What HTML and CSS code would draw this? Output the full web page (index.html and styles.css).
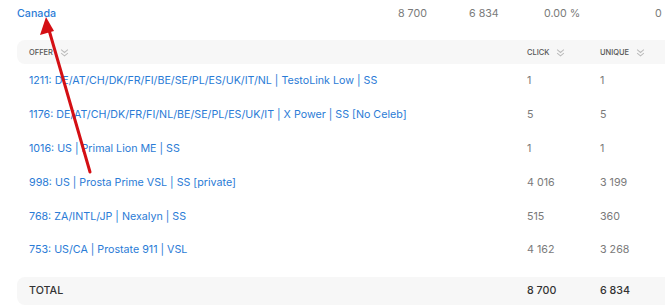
FILE: index.html
```html
<!DOCTYPE html>
<html>
<head>
<meta charset="utf-8">
<link rel="stylesheet" href="styles.css">
</head>
<body>
<div class="page">
  <div class="country-row">
    <a class="country">Canada</a>
    <span class="cnum c1">8 700</span>
    <span class="cnum c2">6 834</span>
    <span class="cnum c3">0.00 %</span>
    <span class="cnum c4">0</span>
  </div>
  <div class="table">
    <div class="row head">
      <div class="cell offer">OFFER <svg class="chev" viewBox="0 0 8 8"><path d="M1 1.5 L4 4 L7 1.5 M1 4.5 L4 7 L7 4.5" fill="none" stroke="#bbb" stroke-width="0.9"/></svg></div>
      <div class="cell num">CLICK <svg class="chev" viewBox="0 0 8 8"><path d="M1 1.5 L4 4 L7 1.5 M1 4.5 L4 7 L7 4.5" fill="none" stroke="#bbb" stroke-width="0.9"/></svg></div>
      <div class="cell num">UNIQUE <svg class="chev" viewBox="0 0 8 8"><path d="M1 1.5 L4 4 L7 1.5 M1 4.5 L4 7 L7 4.5" fill="none" stroke="#bbb" stroke-width="0.9"/></svg></div>
    </div>
    <div class="row">
      <div class="cell offer link">1211: DE/AT/CH/DK/FR/FI/BE/SE/PL/ES/UK/IT/NL | TestoLink Low | SS</div>
      <div class="cell num">1</div><div class="cell num">1</div>
    </div>
    <div class="row">
      <div class="cell offer link">1176: DE/AT/CH/DK/FR/FI/NL/BE/SE/PL/ES/UK/IT | X Power | SS [No Celeb]</div>
      <div class="cell num">5</div><div class="cell num">5</div>
    </div>
    <div class="row">
      <div class="cell offer link">1016: US | Primal Lion ME | SS</div>
      <div class="cell num">1</div><div class="cell num">1</div>
    </div>
    <div class="row">
      <div class="cell offer link">998: US | Prosta Prime VSL | SS [private]</div>
      <div class="cell num">4 016</div><div class="cell num">3 199</div>
    </div>
    <div class="row">
      <div class="cell offer link">768: ZA/INTL/JP | Nexalyn | SS</div>
      <div class="cell num">515</div><div class="cell num">360</div>
    </div>
    <div class="row">
      <div class="cell offer link">753: US/CA | Prostate 911 | VSL</div>
      <div class="cell num">4 162</div><div class="cell num">3 268</div>
    </div>
    <div class="row total">
      <div class="cell offer">TOTAL</div>
      <div class="cell num">8 700</div><div class="cell num">6 834</div>
    </div>
  </div>
  <svg class="arrow" width="120" height="200" viewBox="0 0 120 200">
    <line x1="90" y1="172" x2="49" y2="30" stroke="#d40f14" stroke-width="3" stroke-linecap="round"/>
    <polygon points="46,17 40,35 54,31" fill="#d40f14"/>
  </svg>
</div>
</body>
</html>
```
FILE: styles.css
```css
html, body {
  margin: 0;
  padding: 0;
  background: #fff;
}
body {
  font-family: Inter, "Liberation Sans", sans-serif;
  font-size: 10.7px;
  width: 665px;
  height: 307px;
  overflow: hidden;
}
.page {
  position: relative;
  padding-left: 17px;
  width: 648px;
  height: 307px;
  overflow: hidden;
}
.country-row {
  display: flex;
  align-items: center;
  height: 26px;
  margin-bottom: 14px;
  color: #7a7a7a;
}
.country {
  color: #2a7bd6;
  font-weight: 500;
  width: 381px;
}
.cnum { display: block; }
.c1 { width: 71px; }
.c2 { width: 75px; }
.c3 { width: 111px; }
.c4 { width: 10px; }
.table {
  width: 700px;
}
.row {
  display: flex;
  align-items: center;
  height: 33.8px;
}
.row.head {
  height: 24px;
  background: #f7f7f7;
  border-radius: 8px 0 0 8px;
  font-size: 7.5px;
  font-weight: 500;
  color: #555;
}
.row.total {
  height: 28px;
  margin-top: 10px;
  background: #f7f7f7;
  border-radius: 8px 0 0 8px;
  color: #333;
  font-weight: 500;
}
.cell {
  display: flex;
  align-items: center;
  white-space: nowrap;
}
.cell.offer {
  width: 510px;
  padding-left: 12px;
  box-sizing: border-box;
}
.cell.num {
  width: 73px;
  color: #7a7a7a;
}
.head .cell.num { color: #555; }
.total .cell.num { color: #333; }
.link { color: #2a7bd6; }
.chev {
  width: 9px;
  height: 9px;
  margin-left: 7px;
}
.arrow {
  position: absolute;
  left: 0;
  top: 0;
}
```
